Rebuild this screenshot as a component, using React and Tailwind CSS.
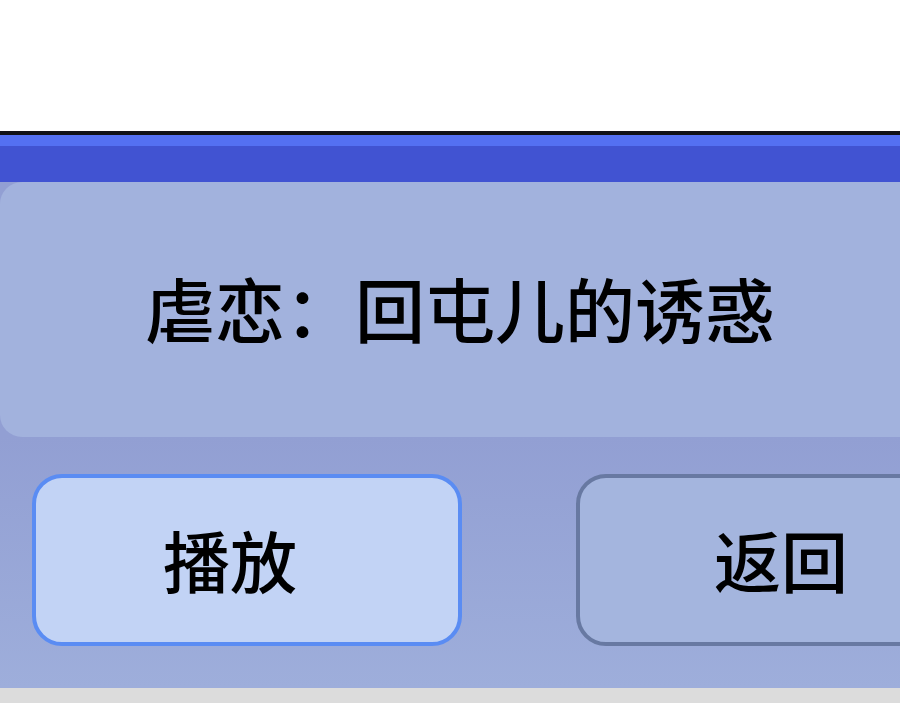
export default function App() {
  const cjk = { fontFamily: '"Noto Sans CJK SC", "Noto Sans", sans-serif' };

  return (
    <div className="w-[900px] h-[703px] overflow-hidden bg-white flex flex-col" style={cjk}>
      {/* blank area above the dialog */}
      <div className="h-[131px] bg-white shrink-0" />

      {/* dialog frame edge */}
      <div className="h-[4px] bg-[#111218] shrink-0" />
      <div className="h-[11px] bg-[#5470f2] shrink-0" />
      <div className="h-[36px] bg-[#4153d2] shrink-0" />

      {/* dialog body */}
      <div className="flex-1 bg-[#929fd3] flex flex-col">
        <div className="h-[255px] w-[960px] shrink-0 rounded-l-[22px] bg-[#a2b2dd] flex items-center pl-[145px] pb-[4px]">
          <h1 className="text-[70px] leading-none font-medium text-black">
            虐恋：回屯儿的诱惑
          </h1>
        </div>

        <div className="flex gap-[114px] pl-[32px] pt-[37px] h-[251px] shrink-0 bg-gradient-to-b from-[#929fd3] to-[#9eaedb]">
          <button className="w-[430px] h-[172px] shrink-0 rounded-[30px] border-[4px] border-[#5a8cf3] bg-[#c2d3f5] flex items-center pl-[127px] pb-[4px]">
            <span className="text-[67px] leading-none font-medium text-black">播放</span>
          </button>
          <button className="w-[430px] h-[172px] shrink-0 rounded-[30px] border-[4px] border-[#6879a2] bg-[#a4b5de] flex items-center pl-[134px] pb-[4px]">
            <span className="text-[67px] leading-none font-medium text-black">返回</span>
          </button>
        </div>

        <div className="flex-1 bg-[#dcdcdc]" />
      </div>
    </div>
  );
}
